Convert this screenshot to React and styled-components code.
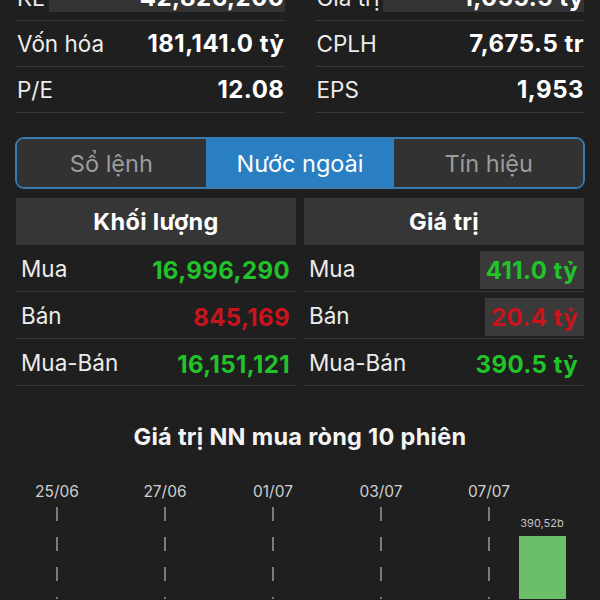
import React from "react";
import styled, { createGlobalStyle } from "styled-components";

const stats = [
  [
    { label: "KL", value: "42,826,200", masked: true },
    { label: "Vốn hóa", value: "181,141.0 tỷ" },
    { label: "P/E", value: "12.08" },
  ],
  [
    { label: "Giá trị", value: "1,055.5 tỷ", masked: true },
    { label: "CPLH", value: "7,675.5 tr" },
    { label: "EPS", value: "1,953" },
  ],
];

const tabs = ["Sổ lệnh", "Nước ngoài", "Tín hiệu"];

const tables = [
  {
    title: "Khối lượng",
    rows: [
      { label: "Mua", value: "16,996,290", tone: "up" },
      { label: "Bán", value: "845,169", tone: "down" },
      { label: "Mua-Bán", value: "16,151,121", tone: "up" },
    ],
  },
  {
    title: "Giá trị",
    rows: [
      { label: "Mua", value: "411.0 tỷ", tone: "up", boxed: true },
      { label: "Bán", value: "20.4 tỷ", tone: "down", boxed: true },
      { label: "Mua-Bán", value: "390.5 tỷ", tone: "up" },
    ],
  },
];

const dates = ["25/06", "27/06", "01/07", "03/07", "07/07"];

export default function App() {
  return (
    <>
      <GlobalStyle />
      <Page>
        <StatsGrid>
          {stats.map((col, i) => (
            <StatColumn key={i}>
              {col.map((s) => (
                <StatRow key={s.label}>
                  <StatLabel>{s.label}</StatLabel>
                  {s.masked ? (
                    <MaskedValue>{s.value}</MaskedValue>
                  ) : (
                    <StatValue>{s.value}</StatValue>
                  )}
                </StatRow>
              ))}
            </StatColumn>
          ))}
        </StatsGrid>

        <Tabs>
          {tabs.map((t, i) => (
            <Tab key={t} active={i === 1}>
              {t}
            </Tab>
          ))}
        </Tabs>

        <TablesGrid>
          {tables.map((tb) => (
            <Table key={tb.title}>
              <TableHeader>{tb.title}</TableHeader>
              {tb.rows.map((r) => (
                <TableRow key={r.label}>
                  <RowLabel>{r.label}</RowLabel>
                  <RowValue tone={r.tone} boxed={r.boxed}>
                    {r.value}
                  </RowValue>
                </TableRow>
              ))}
            </Table>
          ))}
        </TablesGrid>

        <ChartTitle>Giá trị NN mua ròng 10 phiên</ChartTitle>
        <Chart viewBox="0 0 600 130" width="600" height="130">
          {dates.map((d, i) => {
            const x = 57 + i * 108;
            return (
              <g key={d}>
                <text
                  x={x}
                  y="28"
                  textAnchor="middle"
                  fill="#cfcfcf"
                  fontSize="15.5"
                  fontFamily="Inter, sans-serif"
                >
                  {d}
                </text>
                <line
                  x1={x}
                  y1="38"
                  x2={x}
                  y2="130"
                  stroke="#9a9a9a"
                  strokeWidth="1.5"
                  strokeDasharray="14 16"
                />
              </g>
            );
          })}
          <text
            x="542"
            y="58"
            textAnchor="middle"
            fill="#c4c4c4"
            fontSize="11"
            fontFamily="Inter, sans-serif"
          >
            390,52b
          </text>
          <rect x="519" y="67" width="47" height="70" fill="#6bbf68" />
        </Chart>
      </Page>
    </>
  );
}

const GlobalStyle = createGlobalStyle`
  html, body {
    margin: 0;
    padding: 0;
    background: #1f1f1f;
    height: 600px;
    overflow: hidden;
  }
  body {
    font-family: Inter, "Noto Sans", sans-serif;
    color: #f2f2f2;
  }
`;

const Page = styled.div`
  width: 600px;
  display: flex;
  flex-direction: column;
  margin-top: -25px;
`;

const StatsGrid = styled.div`
  display: grid;
  grid-template-columns: 1fr 1fr;
  column-gap: 31px;
  padding: 0 16px;
`;

const StatColumn = styled.div`
  display: flex;
  flex-direction: column;
`;

const StatRow = styled.div`
  height: 45px;
  border-bottom: 1px solid #3a3a3a;
  display: flex;
  align-items: center;
  justify-content: space-between;
`;

const StatLabel = styled.span`
  font-size: 22.5px;
  color: #ececec;
  padding-left: 1px;
`;

const StatValue = styled.span`
  font-size: 24px;
  font-weight: 700;
  letter-spacing: 0.5px;
  color: #ffffff;
`;

const MaskedValue = styled.span`
  flex: 1;
  align-self: stretch;
  margin: 0 0 8px 4px;
  background: #333333;
  display: flex;
  align-items: center;
  justify-content: flex-end;
  padding-top: 8px;
  font-size: 24px;
  font-weight: 700;
  letter-spacing: 0.5px;
  color: #ffffff;
`;

const Tabs = styled.div`
  display: flex;
  margin: 24px 15px 0;
  height: 48px;
  border: 2px solid #3a7cb0;
  border-radius: 9px;
  overflow: hidden;
`;

const Tab = styled.div`
  flex: 1;
  display: flex;
  align-items: center;
  justify-content: center;
  font-size: 23.5px;
  background: ${(p) => (p.active ? "#2a7ec2" : "#323232")};
  color: ${(p) => (p.active ? "#ffffff" : "#9c9c9c")};
`;

const TablesGrid = styled.div`
  display: grid;
  grid-template-columns: 1fr 1fr;
  column-gap: 8px;
  padding: 0 16px;
  margin-top: 9px;
`;

const Table = styled.div`
  display: flex;
  flex-direction: column;
`;

const TableHeader = styled.div`
  height: 47px;
  background: #363636;
  display: flex;
  align-items: center;
  justify-content: center;
  font-size: 23.5px;
  font-weight: 700;
  letter-spacing: 0.3px;
  color: #ffffff;
`;

const TableRow = styled.div`
  height: 46px;
  border-bottom: 1px solid #3a3a3a;
  display: flex;
  align-items: center;
  justify-content: space-between;
  padding-left: 5px;
`;

const RowLabel = styled.span`
  font-size: 22.5px;
  color: #ececec;
`;

const RowValue = styled.span`
  align-self: stretch;
  margin: 6px 0 2px;
  padding: 0 6px;
  display: flex;
  align-items: center;
  font-size: 24px;
  font-weight: 700;
  letter-spacing: 0.4px;
  background: ${(p) => (p.boxed ? "#3a3a3a" : "transparent")};
  color: ${(p) => (p.tone === "down" ? "#c8141b" : "#22c32a")};
`;

const ChartTitle = styled.div`
  margin-top: 38px;
  text-align: center;
  font-size: 23.5px;
  line-height: 26px;
  font-weight: 700;
  letter-spacing: 0.3px;
  color: #f4f4f4;
`;

const Chart = styled.svg`
  display: block;
  margin-top: 19px;
`;
